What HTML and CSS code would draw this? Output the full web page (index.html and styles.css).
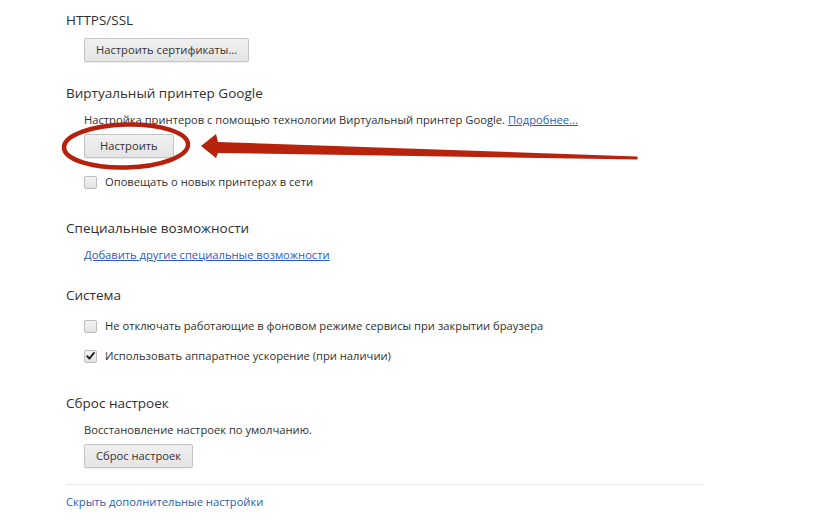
FILE: index.html
```html
<!DOCTYPE html>
<html lang="ru">
<head>
<meta charset="utf-8">
<title>Настройки</title>
<link rel="stylesheet" href="styles.css">
</head>
<body>
<div class="page">
  <section class="sec sec-first">
    <h3 class="title">HTTPS/SSL</h3>
    <div class="content">
      <button class="btn btn-top">Настроить сертификаты...</button>
    </div>
  </section>

  <section class="sec sec-print">
    <h3 class="title">Виртуальный принтер Google</h3>
    <div class="content">
      <p class="desc">Настройка принтеров с помощью технологии Виртуальный принтер Google. <a href="#" class="link">Подробнее...</a></p>
      <button class="btn btn-after-desc btn-wide">Настроить</button>
      <label class="check check-after-btn"><span class="box"></span><span>Оповещать о новых принтерах в сети</span></label>
    </div>
  </section>

  <section class="sec sec-a11y">
    <h3 class="title">Специальные возможности</h3>
    <div class="content">
      <p class="desc"><a href="#" class="link">Добавить другие специальные возможности</a></p>
    </div>
  </section>

  <section class="sec sec-sys">
    <h3 class="title">Система</h3>
    <div class="content">
      <label class="check check-first"><span class="box"></span><span>Не отключать работающие в фоновом режиме сервисы при закрытии браузера</span></label>
      <label class="check check-next"><span class="box checked"><svg viewBox="0 0 13 13" width="13" height="13"><path d="M2.6 6.8 L5.2 9.6 L10.6 2.8" fill="none" stroke="#222" stroke-width="2.2" stroke-linecap="round" stroke-linejoin="round"/></svg></span><span>Использовать аппаратное ускорение (при наличии)</span></label>
    </div>
  </section>

  <section class="sec sec-reset">
    <h3 class="title">Сброс настроек</h3>
    <div class="content">
      <p class="desc">Восстановление настроек по умолчанию.</p>
      <button class="btn btn-after-desc">Сброс настроек</button>
    </div>
  </section>

  <div class="footer">
    <a href="#" class="hide-link">Скрыть дополнительные настройки</a>
  </div>
</div>

<svg class="annot" width="834" height="524" viewBox="0 0 834 524">
  <ellipse cx="126" cy="146" rx="62" ry="21.5" fill="none" stroke="#b5210d" stroke-width="4.5" transform="rotate(-1.5 126 146)"/>
  <path d="M201 146 L216 134 L218 142 L637 156.5 L638 158 L637 159.5 L218 153 L216 158 Z" fill="#b8230e"/>
</svg>
</body>
</html>
```

FILE: styles.css
```css
html, body {
  margin: 0;
  padding: 0;
  background: #ffffff;
}

body {
  font-family: "Open Sans", "Noto Sans", "DejaVu Sans", sans-serif;
  color: #303030;
  position: relative;
  width: 834px;
  height: 524px;
  overflow: hidden;
}

.page {
  padding: 10px 0 0 66px;
  display: flex;
  flex-direction: column;
}

.sec {
  display: flex;
  flex-direction: column;
}

.sec-print { margin-top: 21px; }
.sec-a11y { margin-top: 26px; }
.sec-sys { margin-top: 21px; }
.sec-reset { margin-top: 27px; }

.title {
  margin: 0;
  font-size: 13.5px;
  font-weight: 400;
  line-height: 20px;
  height: 20px;
  color: #303030;
}

.content {
  padding-left: 18px;
  display: flex;
  flex-direction: column;
  align-items: flex-start;
}

.desc {
  margin: 8px 0 0 0;
  font-size: 11.2px;
  line-height: 18px;
  color: #303030;
}

.link {
  color: #2a5db0;
  text-decoration: underline;
}

.btn {
  font-family: inherit;
  font-size: 11.2px;
  color: #333;
  height: 24px;
  padding: 0 11px;
  border: 1px solid #c4c4c4;
  border-radius: 2px;
  background: linear-gradient(#f0f0f0, #e4e4e4);
  box-shadow: 0 1px 0 rgba(0,0,0,0.06);
  line-height: 22px;
}

.btn-wide { padding: 0 15px; }

.btn-top { margin-top: 8px; }
.btn-after-desc { margin-top: 5px; }

.check {
  display: flex;
  align-items: center;
  gap: 8px;
  font-size: 11.2px;
  line-height: 20px;
  height: 20px;
  color: #303030;
}

.check-after-btn { margin-top: 14px; }
.check-first { margin-top: 11px; }
.check-next { margin-top: 10px; }

.box {
  width: 11px;
  height: 11px;
  border: 1px solid #bdbdbd;
  border-radius: 2px;
  background: linear-gradient(#f4f4f4, #e2e2e2);
  display: flex;
  align-items: center;
  justify-content: center;
  flex: none;
}

.box svg {
  display: block;
  width: 12px;
  height: 12px;
}

.footer {
  margin-top: 16px;
  width: 638px;
  border-top: 1px solid #e8e8e8;
  padding-top: 8px;
}

.hide-link {
  display: block;
  font-size: 11.2px;
  line-height: 18px;
  color: #2a5db0;
  text-decoration: none;
}

.annot {
  position: absolute;
  left: 0;
  top: 0;
  pointer-events: none;
}
```
